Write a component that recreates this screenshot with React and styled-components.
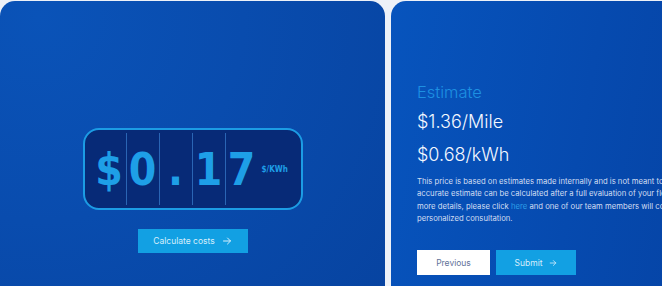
import React from "react";
import styled, { createGlobalStyle } from "styled-components";

const Global = createGlobalStyle`
  html, body { margin: 0; padding: 0; }
  body {
    background: #edf1f8;
    overflow: hidden;
    width: 662px;
    height: 286px;
    font-family: Inter, "Noto Sans", sans-serif;
  }
`;

const Page = styled.div`
  display: flex;
  gap: 6px;
  padding-top: 1px;
  width: 662px;
  height: 286px;
  box-sizing: border-box;
  overflow: hidden;
`;

const Card = styled.section`
  flex: none;
  width: ${(p) => p.$width}px;
  height: 310px;
  border-radius: 15px 15px 0 0;
  box-sizing: border-box;
  background: ${(p) => p.$bg};
`;

const LeftCard = styled(Card)`
  display: flex;
  flex-direction: column;
  align-items: center;
  padding-top: 127px;
  gap: 19px;
`;

const RightCard = styled(Card)`
  display: flex;
  flex-direction: column;
  align-items: flex-start;
  padding: 81px 0 0 26px;
`;

const Counter = styled.div`
  display: flex;
  align-items: center;
  width: 220px;
  height: 82px;
  box-sizing: border-box;
  border: 2px solid #1c9ce4;
  border-radius: 16px;
  background: #072a77;
  padding-left: 8px;
`;

const Cell = styled.div`
  width: 33px;
  height: 72px;
  box-sizing: border-box;
  display: flex;
  align-items: center;
  justify-content: center;
  border-left: ${(p) => (p.$divider ? "1px solid #2a65b4" : "none")};
  font-family: "DejaVu Sans Condensed", "DejaVu Sans", sans-serif;
  font-stretch: condensed;
  font-weight: 700;
  font-size: 44px;
  line-height: 1;
  color: #1e9fe7;
  padding-top: 2px;
`;

const Unit = styled.span`
  margin-left: 4px;
  font-family: "DejaVu Sans Condensed", "DejaVu Sans", sans-serif;
  font-stretch: condensed;
  font-weight: 700;
  font-size: 8px;
  color: #1e9fe7;
`;

const Button = styled.button`
  display: inline-flex;
  align-items: center;
  justify-content: center;
  gap: 7px;
  width: ${(p) => p.$w}px;
  height: ${(p) => p.$h}px;
  border: none;
  padding: 0;
  margin: 0;
  background: ${(p) => (p.$light ? "#ffffff" : "#12a0e3")};
  color: ${(p) => (p.$light ? "#5f7299" : "#d6eefc")};
  font-family: Inter, "Noto Sans", sans-serif;
  font-size: 8.5px;
  font-weight: 400;
  cursor: pointer;
`;

const Eyebrow = styled.h3`
  margin: 0;
  font-size: 16.5px;
  line-height: 20px;
  font-weight: 300;
  color: #1d90e2;
`;

const Price = styled.div`
  margin-top: ${(p) => p.$mt}px;
  font-size: 18px;
  line-height: 22px;
  font-weight: 300;
  color: #f4f8ff;
  white-space: nowrap;
`;

const Note = styled.p`
  margin: 10px 0 0 0;
  font-size: 7.7px;
  line-height: 12.3px;
  color: #d2def2;
  white-space: nowrap;
`;

const Link = styled.a`
  color: #2c9fe6;
  text-decoration: none;
`;

const Actions = styled.div`
  display: flex;
  gap: 6px;
  margin-top: 25px;
`;

const Arrow = ({ size = 10 }) => (
  <svg width={size} height={size} viewBox="0 0 10 10" fill="none" stroke="currentColor" strokeWidth="1" strokeLinecap="round" strokeLinejoin="round">
    <path d="M1.5 5h7M5.5 2l3 3-3 3" />
  </svg>
);

export default function App() {
  return (
    <>
      <Global />
      <Page>
        <LeftCard $width={385} $bg="radial-gradient(circle at 10% 5%, #0a53b8 0%, #094cae 45%, #0743a0 100%)">
          <Counter>
            <Cell>$</Cell>
            <Cell $divider>0</Cell>
            <Cell $divider>.</Cell>
            <Cell $divider>1</Cell>
            <Cell $divider>7</Cell>
            <Unit>$/KWh</Unit>
          </Counter>
          <Button $w={110} $h={24}>
            Calculate costs <Arrow />
          </Button>
        </LeftCard>
        <RightCard $width={420} $bg="linear-gradient(100deg, #0754bd 0%, #064aaf 45%, #053f9e 100%)">
          <Eyebrow>Estimate</Eyebrow>
          <Price $mt={9}>$1.36/Mile</Price>
          <Price $mt={11}>$0.68/kWh</Price>
          <Note>
            This price is based on estimates made internally and is not meant to be a final quote. A more
            <br />
            accurate estimate can be calculated after a full evaluation of your fleet and charging needs. For
            <br />
            more details, please click <Link href="#">here</Link> and one of our team members will contact you for a
            <br />
            personalized consultation.
          </Note>
          <Actions>
            <Button $light $w={73} $h={25}>Previous</Button>
            <Button $w={80} $h={25}>
              Submit <Arrow size={8} />
            </Button>
          </Actions>
        </RightCard>
      </Page>
    </>
  );
}
